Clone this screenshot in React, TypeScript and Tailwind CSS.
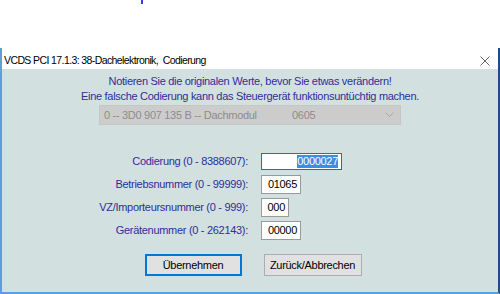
import React from 'react';

const rows = [
  { label: 'Codierung (0 - 8388607):', value: '0000027', width: 'w-[81px]', focused: true },
  { label: 'Betriebsnummer (0 - 99999):', value: '01065', width: 'w-[40px]' },
  { label: 'VZ/Importeursnummer (0 - 999):', value: '000', width: 'w-[28px]' },
  { label: 'Gerätenummer (0 - 262143):', value: '00000', width: 'w-[40px]' },
];

export default function App() {
  return (
    <div className="w-[500px] h-[294px] overflow-hidden bg-white font-['Liberation_Sans',Arial,sans-serif]">
      <div className="h-[48px]">
        <div className="ml-[141px] h-[4px] w-[2px] bg-[#3a3af0]" />
      </div>
      <div className="flex h-[246px] flex-col border-l-2 border-r-2 border-b-2 border-l-[#5c9fdc] border-r-[#1d4d86] border-b-[#5c9fdc]">
        <div className="flex h-[21px] items-center justify-between bg-white pl-[2px] pr-[8px] pt-[5px]">
          <span className="text-[10.5px] tracking-[-0.6px] text-black">
            VCDS PCI 17.1.3: 38-Dachelektronik,&nbsp; Codierung
          </span>
          <svg width="10" height="10" viewBox="0 0 10 10">
            <path d="M0.5 0.5 L9.5 9.5 M9.5 0.5 L0.5 9.5" stroke="#666" strokeWidth="1" />
          </svg>
        </div>
        <div className="flex flex-1 flex-col items-center bg-[#d2e0e0] pt-[5px] text-[11px] tracking-[-0.3px]">
          <p className="leading-[15px] text-[#2e2e9a]">Notieren Sie die originalen Werte, bevor Sie etwas verändern!</p>
          <p className="leading-[15px] text-[#2e2e9a]">Eine falsche Codierung kann das Steuergerät funktionsuntüchtig machen.</p>
          <div className="mt-[1px] flex h-[20px] w-[302px] items-center border border-[#c6c6c6] bg-[#cccccc] pl-[4px] pr-[6px] text-[#8c8c8c]">
            <span className="w-[188px]">0 -- 3D0 907 135 B -- Dachmodul</span>
            <span className="flex-1">0605</span>
            <svg width="9" height="6" viewBox="0 0 9 6">
              <path d="M0.5 0.5 L4.5 4.5 L8.5 0.5" fill="none" stroke="#a8a8a8" strokeWidth="1" />
            </svg>
          </div>
          <div className="mt-[26px] flex w-full flex-col gap-[3px]">
            {rows.map((row) => (
              <div key={row.label} className="flex h-[20px] items-center">
                <span className="w-[246px] text-right text-[#2e2e9a]">{row.label}</span>
                <div
                  className={`ml-[13px] flex ${row.width} items-center justify-end bg-white pr-[3px] text-black ${
                    row.focused ? 'h-[17px] border border-[#0078d7]' : 'h-[19px] border border-[#9a9a9a]'
                  }`}
                >
                  {row.focused ? (
                    <span className="bg-[#3a8ee6] leading-[13px] text-white">{row.value}</span>
                  ) : (
                    <span>{row.value}</span>
                  )}
                </div>
              </div>
            ))}
          </div>
          <div className="mt-[14px] flex gap-[22px] pl-[6px]">
            <button className="h-[22px] w-[97px] border-2 border-[#0078d7] bg-[#e1e1e1] text-black">
              Übernehmen
            </button>
            <button className="h-[22px] w-[98px] border border-[#adadad] bg-[#e1e1e1] text-black">
              Zurück/Abbrechen
            </button>
          </div>
        </div>
      </div>
    </div>
  );
}
